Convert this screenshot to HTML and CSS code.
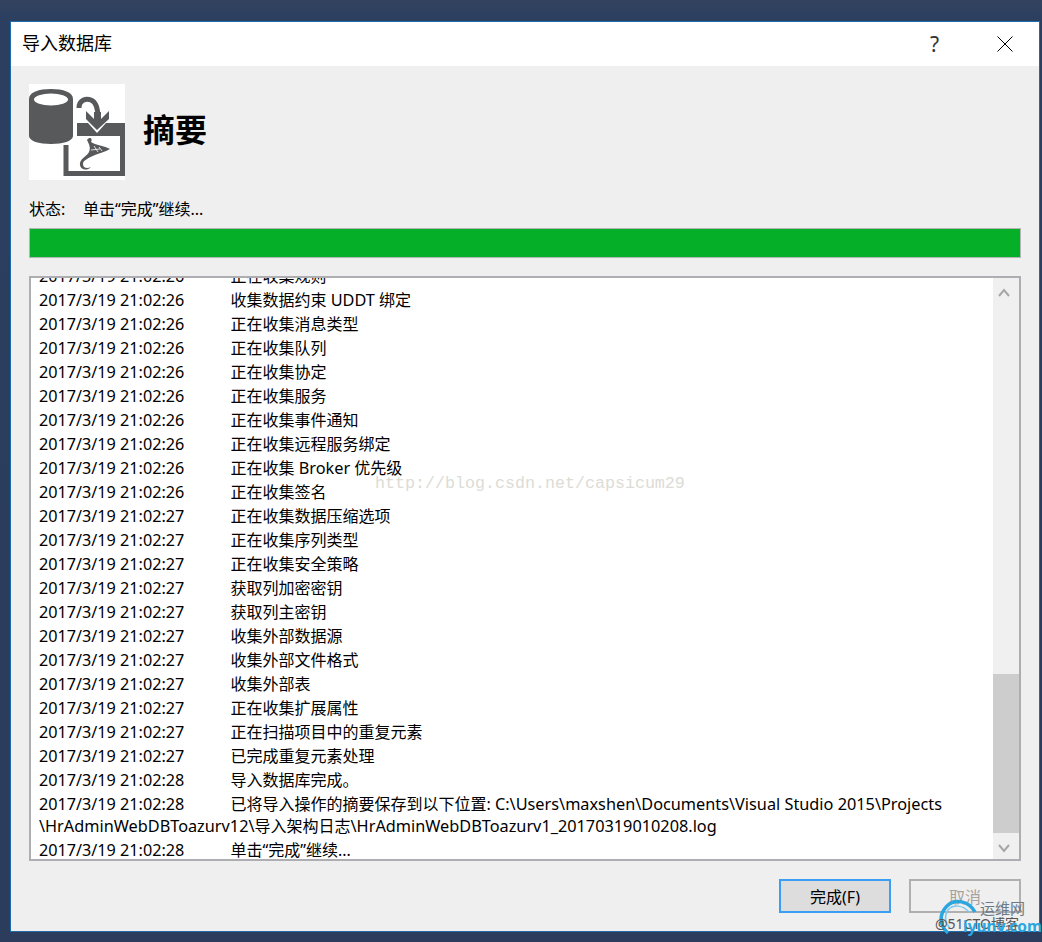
FILE: index.html
```html
<!DOCTYPE html>
<html lang="zh">
<head>
<meta charset="utf-8">
<title>导入数据库</title>
<link rel="stylesheet" href="styles.css">
</head>
<body>
<div class="dialog">
  <div class="titlebar">
    <span class="title">导入数据库</span>
    <span class="help">?</span>
    <svg class="close" width="16" height="16" viewBox="0 0 16 16"><path d="M0.5 0.5L15.5 15.5M15.5 0.5L0.5 15.5" stroke="#000" stroke-width="1" fill="none"/></svg>
  </div>
  <div class="content">
    <div class="header">
      <div class="logo">
        <svg width="96" height="96" viewBox="0 0 96 96">
          <path d="M0 15C0 8 10 5 22 5S44 8 44 15V52C44 57 34 60 22 60S0 57 0 52Z" fill="#58595b"/>
          <ellipse cx="22" cy="15.5" rx="17" ry="6" fill="#fff"/>
          <path d="M50 24C50 16 57 14 62 16C67 18 69 23 69 34" stroke="#58595b" stroke-width="5" fill="none"/>
          <path d="M57 27L65 35V28H72V35L80 27V35L68 46L57 35Z" fill="#58595b"/>
          <path d="M48 39H59L68 49L77 39H96V52H48Z" fill="#58595b"/>
          <path d="M34.5 61H39.5V87H91V52H96V92H34.5Z" fill="#58595b"/>
          <path d="M58 56C61 52 64 55 62 58C66 61 76 62 81 65C76 68 70 69 66 71C60 74 54 76 54 80C54 84 58 85 62 83C57 88 50 85 51 79C52 74 58 72 60 68C62 64 60 60 58 56Z" fill="#58595b"/>
          <path d="M65 62L69 68M70 63L73 67M62 66L71 65" stroke="#fff" stroke-width="0.8" fill="none"/>
        </svg>
      </div>
      <h1 class="heading">摘要</h1>
    </div>
    <div class="status"><span class="status-label">状态:</span><span>单击“完成”继续...</span></div>
    <div class="progress"></div>
    <div class="logbox">
      <div class="log">
        <div class="rows">
          <div class="row"><span class="time">2017/3/19 21:02:26</span>正在收集规则</div>
          <div class="row"><span class="time">2017/3/19 21:02:26</span>收集数据约束 <span class="lat">UDDT</span> 绑定</div>
          <div class="row"><span class="time">2017/3/19 21:02:26</span>正在收集消息类型</div>
          <div class="row"><span class="time">2017/3/19 21:02:26</span>正在收集队列</div>
          <div class="row"><span class="time">2017/3/19 21:02:26</span>正在收集协定</div>
          <div class="row"><span class="time">2017/3/19 21:02:26</span>正在收集服务</div>
          <div class="row"><span class="time">2017/3/19 21:02:26</span>正在收集事件通知</div>
          <div class="row"><span class="time">2017/3/19 21:02:26</span>正在收集远程服务绑定</div>
          <div class="row"><span class="time">2017/3/19 21:02:26</span>正在收集 <span class="lat">Broker</span> 优先级</div>
          <div class="row"><span class="time">2017/3/19 21:02:26</span>正在收集签名</div>
          <div class="row"><span class="time">2017/3/19 21:02:27</span>正在收集数据压缩选项</div>
          <div class="row"><span class="time">2017/3/19 21:02:27</span>正在收集序列类型</div>
          <div class="row"><span class="time">2017/3/19 21:02:27</span>正在收集安全策略</div>
          <div class="row"><span class="time">2017/3/19 21:02:27</span>获取列加密密钥</div>
          <div class="row"><span class="time">2017/3/19 21:02:27</span>获取列主密钥</div>
          <div class="row"><span class="time">2017/3/19 21:02:27</span>收集外部数据源</div>
          <div class="row"><span class="time">2017/3/19 21:02:27</span>收集外部文件格式</div>
          <div class="row"><span class="time">2017/3/19 21:02:27</span>收集外部表</div>
          <div class="row"><span class="time">2017/3/19 21:02:27</span>正在收集扩展属性</div>
          <div class="row"><span class="time">2017/3/19 21:02:27</span>正在扫描项目中的重复元素</div>
          <div class="row"><span class="time">2017/3/19 21:02:27</span>已完成重复元素处理</div>
          <div class="row"><span class="time">2017/3/19 21:02:28</span>导入数据库完成。</div>
          <div class="row"><span class="time">2017/3/19 21:02:28</span>已将导入操作的摘要保存到以下位置: <span class="lat">C:\Users\maxshen\Documents\Visual Studio 2015\Projects<br>\HrAdminWebDBToazurv12\</span>导入架构日志<span class="lat">\HrAdminWebDBToazurv1_20170319010208.log</span></div>
          <div class="row"><span class="time">2017/3/19 21:02:28</span>单击“完成”继续...</div>
        </div>
        <div class="url-mark">http://blog.csdn.net/capsicum29</div>
      </div>
      <div class="scrollbar">
        <svg class="arrow" width="26" height="28" viewBox="0 0 26 28"><path d="M6 18L11 12L16 18" stroke="#a6a6a6" stroke-width="2" fill="none"/></svg>
        <div class="track"><div class="thumb"></div></div>
        <svg class="arrow" width="26" height="26" viewBox="0 0 26 26"><path d="M6 12L11 18L16 12" stroke="#a6a6a6" stroke-width="2" fill="none"/></svg>
      </div>
    </div>
    <div class="buttons">
      <div class="btn primary">完成(F)</div>
      <div class="btn disabled">取消</div>
    </div>
  </div>
  <div class="stamp">
    <svg class="swirl" width="60" height="46" viewBox="0 0 60 46">
      <path d="M40 17C34 6 20 3 12 11C4 19 4 30 13 38" stroke="#2aa6e0" stroke-width="3.5" fill="none"/>
      <path d="M34 17C28 10 18 9 13 15C9 21 10 28 15 33" stroke="#7cc8ec" stroke-width="1.5" fill="none"/>
    </svg>
    <span class="stamp-cn">运维网</span>
    <span class="stamp-blog">@51CTO博客</span>
    <span class="stamp-site">iyunv.com</span>
  </div>
</div>
</body>
</html>
```
FILE: styles.css
```css
html, body { margin: 0; padding: 0; }
body {
  width: 1042px;
  height: 942px;
  overflow: hidden;
  background: linear-gradient(#33435f 0, #2c3f60 20px, #2b3c5c 100%);
  font-family: "Noto Sans", "Noto Sans CJK SC", sans-serif;
  color: #000;
  box-sizing: border-box;
  padding: 21px 0 0 10px;
}
.dialog {
  position: relative;
  width: 1030px;
  height: 911px;
  box-sizing: border-box;
  border: 1px solid #1f6aa8;
  background: #efefef;
}
.titlebar {
  height: 44px;
  box-sizing: border-box;
  background: #fff;
  display: flex;
  align-items: center;
  padding: 0 26px 0 11px;
  font-size: 18px;
}
.title { flex: 1; line-height: 24px; padding-bottom: 2px; }
.help { font-size: 21px; line-height: 24px; width: 12px; color: #333; margin-right: 55px; }
.close { display: block; }
.content { padding: 18px 18px 0 18px; }
.header { display: flex; align-items: center; height: 96px; }
.logo { width: 96px; height: 96px; background: #fff; }
.logo svg { display: block; }
.heading { margin: 0 0 4px 18px; font-size: 32px; font-weight: 700; line-height: 40px; }
.status { margin-top: 17px; height: 24px; line-height: 24px; font-size: 16px; display: flex; }
.status-label { width: 54px; }
.progress {
  margin-top: 7px;
  height: 28px;
  background: #05af27;
  border: 1px solid #b4b4b4;
  width: 990px;
}
.logbox {
  margin-top: 18px;
  width: 992px;
  height: 585px;
  box-sizing: border-box;
  border: 2px solid #adadb2;
  background: #fff;
  display: flex;
}
.log { flex: 1; overflow: hidden; position: relative; }
.rows { margin-top: -14px; padding-left: 8px; }
.row { font-size: 16px; line-height: 22px; padding: 1px 0; white-space: nowrap; }
.time { display: inline-block; width: 191.5px; font-size: 16.2px; line-height: 16px; }
.lat { font-size: 16.3px; line-height: 16px; }
.url-mark {
  position: absolute;
  left: 344px;
  top: 194px;
  font-family: "Liberation Mono", monospace;
  font-size: 16.67px;
  line-height: 24px;
  color: #dcdcd6;
  white-space: nowrap;
}
.scrollbar { width: 26px; background: #f0f0f0; display: flex; flex-direction: column; flex: none; }
.arrow { display: block; flex: none; }
.track { flex: 1; display: flex; flex-direction: column; justify-content: flex-end; }
.thumb { height: 159px; background: #cdcdcd; }
.buttons { display: flex; justify-content: flex-end; gap: 18px; margin-top: 18px; width: 992px; }
.btn {
  width: 112px;
  height: 34px;
  box-sizing: border-box;
  display: flex;
  align-items: center;
  justify-content: center;
  font-size: 16px;
}
.primary { background: #dddddd; border: 2px solid #3c9df5; }
.disabled { background: #efefef; border: 2px solid #b0b0b0; color: #a8a29c; }
.stamp { position: absolute; left: 924px; top: 873px; width: 105px; height: 46px; }
.swirl { position: absolute; left: 0; top: 0; }
.stamp-cn { position: absolute; left: 45px; top: 4px; font-size: 15px; line-height: 18px; color: #6b7a88; }
.stamp-blog { position: absolute; left: 0; top: 20px; font-size: 14px; line-height: 17px; color: #555; white-space: nowrap; }
.stamp-site { position: absolute; left: 28px; top: 22px; font-size: 15.5px; font-weight: 700; line-height: 18px; color: #2aa6e0; white-space: nowrap; }
```
